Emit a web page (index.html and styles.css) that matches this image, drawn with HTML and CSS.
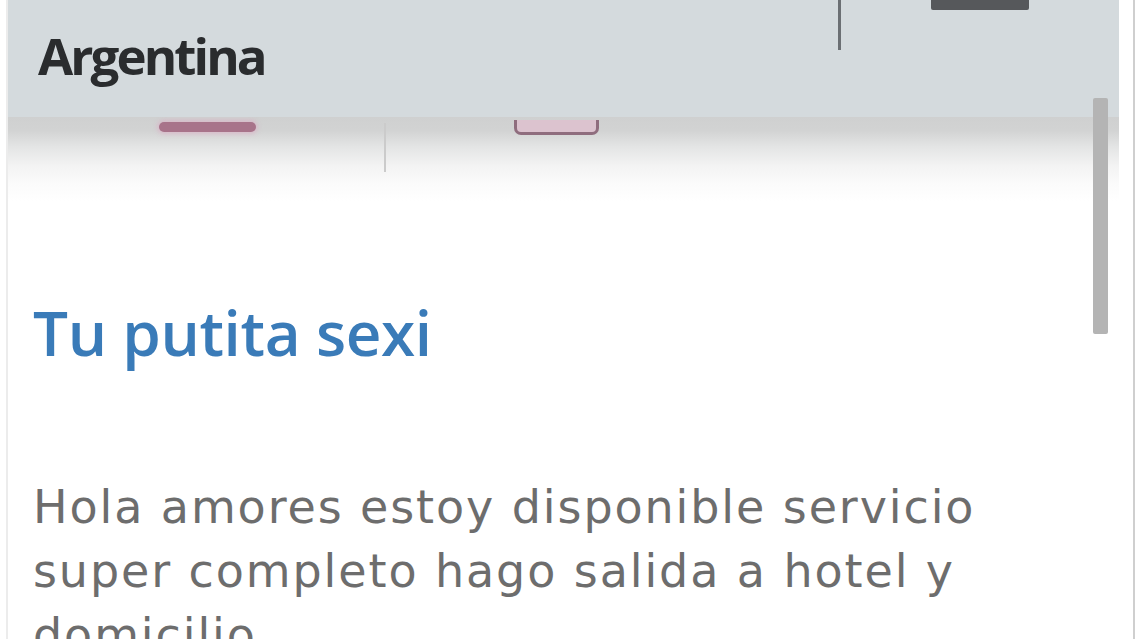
FILE: index.html
```html
<!DOCTYPE html>
<html lang="es">
<head>
<meta charset="utf-8">
<title>Tu putita sexi</title>
<link rel="stylesheet" href="styles.css">
</head>
<body>
<div class="frame">
  <div class="page">
    <header class="topbar">
      <span class="country">Argentina</span>
      <div class="topbar-tools">
        <span class="divider"></span>
        <span class="menu-tab"></span>
      </div>
    </header>
    <div class="tabs">
      <span class="tab-mark tab-mark--bar"></span>
      <span class="tab-sep"></span>
      <span class="tab-mark tab-mark--cup"></span>
    </div>
    <main class="content">
      <h1 class="ad-title">Tu putita sexi</h1>
      <p class="ad-text">Hola amores estoy disponible servicio super completo hago salida a hotel y domicilio</p>
    </main>
    <div class="scrollbar"></div>
  </div>
</div>
</body>
</html>
```
FILE: styles.css
```css
html, body {
  margin: 0;
  padding: 0;
  background: #ffffff;
  overflow: hidden;
}

.frame {
  width: 1135px;
  height: 639px;
  box-sizing: border-box;
  padding-left: 6px;
  padding-right: 3px;
  border-right: 2px solid #cfcfcf;
  display: flex;
}

.page {
  position: relative;
  flex: 1;
  border-left: 2px solid #ececec;
  padding-right: 11px;
  display: flex;
  flex-direction: column;
  font-family: "Open Sans", "Noto Sans", sans-serif;
}

.page > * {
  flex-shrink: 0;
}

.topbar {
  height: 117px;
  background: #d4dadd;
  display: flex;
  justify-content: space-between;
  align-items: flex-start;
  padding-left: 30px;
  position: relative;
  z-index: 2;
}

.country {
  margin-top: 20px;
  font-size: 51px;
  font-weight: 700;
  color: #2a2c2e;
  letter-spacing: -2.9px;
}

.topbar-tools {
  display: flex;
  align-items: flex-start;
  gap: 90px;
  margin-right: 90px;
}

.divider {
  width: 3px;
  height: 50px;
  background: #6b6f73;
}

.menu-tab {
  width: 98px;
  height: 10px;
  background: #56585b;
  border-radius: 0 0 2px 2px;
}

/* tab strip sitting in the bar's shadow */
.tabs {
  height: 84px;
  display: flex;
  align-items: flex-start;
  padding-left: 151px;
  background: linear-gradient(#cfd0d0 0%, #d2d3d3 16%, #e4e5e5 36%, #f3f3f3 58%, #fbfbfb 80%, #ffffff 100%);
}

.tab-mark--bar {
  margin-top: 5px;
  width: 97px;
  height: 10px;
  background: #a8738a;
  border-radius: 5px;
  box-shadow: 0 0 4px 2px rgba(220, 170, 195, 0.6);
}

.tab-sep {
  margin-top: 6px;
  margin-left: 128px;
  width: 2px;
  height: 49px;
  background: #cbcbcb;
}

.tab-mark--cup {
  margin-left: 128px;
  margin-top: 3px;
  width: 79px;
  height: 12px;
  border: 3px solid #8f6d7e;
  border-top: none;
  border-radius: 0 0 7px 7px;
  background: #dcc3cf;
}

.content {
  padding: 0 0 0 25px;
}

.ad-title {
  margin: 96px 0 0;
  font-size: 62px;
  line-height: 70px;
  font-weight: 600;
  color: #3a7bb8;
  letter-spacing: -0.4px;
}

.ad-text {
  margin: 108px 0 0;
  width: 1000px;
  font-family: "DejaVu Sans", "Open Sans", sans-serif;
  font-size: 46px;
  line-height: 64px;
  color: #6d6d6d;
  letter-spacing: 1.9px;
}

.scrollbar {
  position: absolute;
  right: 22px;
  top: 98px;
  width: 15px;
  height: 236px;
  background: #b4b4b4;
  border-radius: 2px;
  z-index: 3;
}
```
